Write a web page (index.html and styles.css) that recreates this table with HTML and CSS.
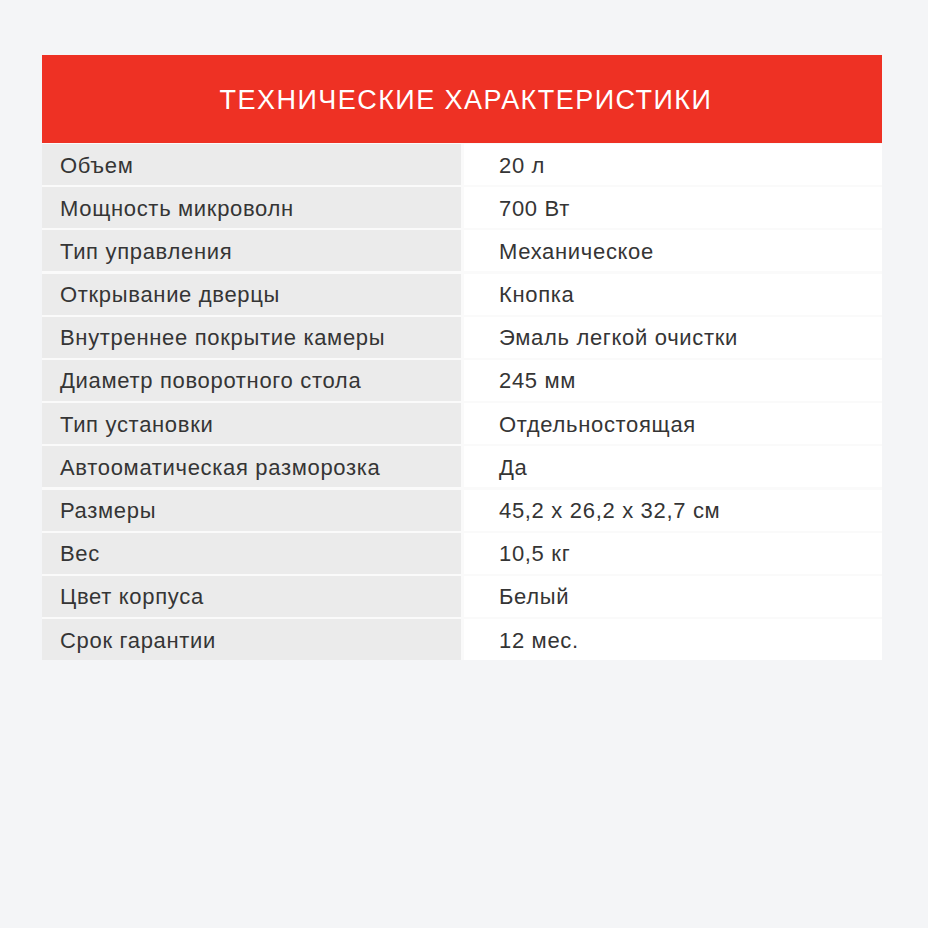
FILE: index.html
```html
<!DOCTYPE html>
<html lang="ru">
<head>
<meta charset="utf-8">
<link rel="stylesheet" href="styles.css">
</head>
<body>
<div class="spec">
  <div class="spec-head">ТЕХНИЧЕСКИЕ ХАРАКТЕРИСТИКИ</div>
  <div class="spec-rows">
    <div class="row"><div class="k">Объем</div><div class="v">20 л</div></div>
    <div class="row"><div class="k">Мощность микроволн</div><div class="v">700 Вт</div></div>
    <div class="row"><div class="k">Тип управления</div><div class="v">Механическое</div></div>
    <div class="row"><div class="k">Открывание дверцы</div><div class="v">Кнопка</div></div>
    <div class="row"><div class="k">Внутреннее покрытие камеры</div><div class="v">Эмаль легкой очистки</div></div>
    <div class="row"><div class="k">Диаметр поворотного стола</div><div class="v">245 мм</div></div>
    <div class="row"><div class="k">Тип установки</div><div class="v">Отдельностоящая</div></div>
    <div class="row"><div class="k">Автооматическая разморозка</div><div class="v">Да</div></div>
    <div class="row"><div class="k">Размеры</div><div class="v">45,2 х 26,2 х 32,7 см</div></div>
    <div class="row"><div class="k">Вес</div><div class="v">10,5 кг</div></div>
    <div class="row"><div class="k">Цвет корпуса</div><div class="v">Белый</div></div>
    <div class="row"><div class="k">Срок гарантии</div><div class="v">12 мес.</div></div>
  </div>
</div>
</body>
</html>
```
FILE: styles.css
```css
html, body {
  margin: 0;
  padding: 0;
  background: #f4f5f7;
}
body {
  width: 928px;
  height: 928px;
  font-family: "Liberation Sans", Arial, sans-serif;
}
.spec {
  margin: 55px 0 0 42px;
  width: 840px;
}
.spec-head {
  height: 88px;
  background: #ee3124;
  color: #fff;
  font-size: 27px;
  letter-spacing: 1.45px;
  display: flex;
  align-items: center;
  justify-content: center;
  padding: 2px 0 0 8px;
  box-sizing: border-box;
}
.spec-rows {
  display: flex;
  flex-direction: column;
  gap: 2.2px;
  background: #fafafa;
  padding-top: 1px;
}
.row {
  display: flex;
  gap: 3px;
  height: 41px;
  font-size: 22px;
  letter-spacing: 0.68px;
  color: #353535;
}
.k {
  width: 419px;
  background: #ebebeb;
  padding-left: 18px;
  padding-top: 2px;
  display: flex;
  align-items: center;
  box-sizing: border-box;
}
.v {
  flex: 1;
  background: #fff;
  padding-left: 35px;
  padding-top: 2px;
  display: flex;
  align-items: center;
  box-sizing: border-box;
}
```
